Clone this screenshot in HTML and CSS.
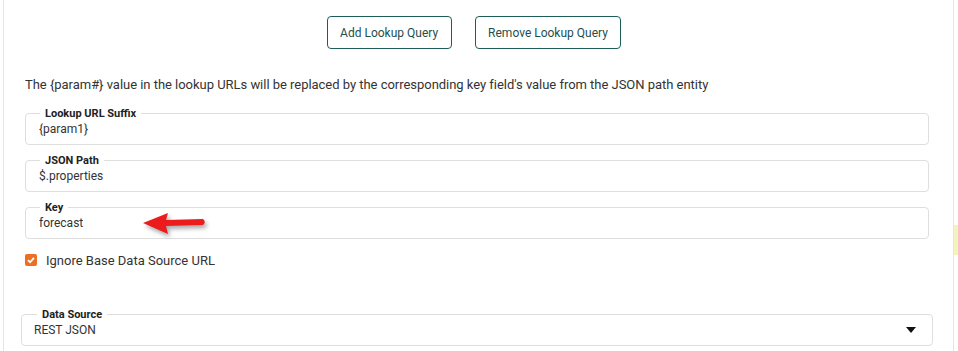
FILE: index.html
```html
<!DOCTYPE html>
<html lang="en">
<head>
    <meta charset="UTF-8">
    <meta name="viewport" content="width=device-width, initial-scale=1.0">
    <title>Lookup Query</title>

    <link rel="stylesheet" href="styles.css">
</head>
<body>

    <div class="page">
        <div class="panel">
            <div class="buttons">
                <button type="button" class="btn">Add Lookup Query</button>
                <button type="button" class="btn">Remove Lookup Query</button>
            </div>

            <p class="hint">The {param#} value in the lookup URLs will be replaced by the corresponding key field's value from the JSON path entity</p>

            <fieldset class="field">
                <legend>Lookup URL Suffix</legend>
                <input type="text" value="{param1}" readonly>
            </fieldset>
            <fieldset class="field">
                <legend>JSON Path</legend>
                <input type="text" value="$.properties" readonly>
            </fieldset>
            <fieldset class="field key_field">
                <legend>Key</legend>
                <input type="text" value="forecast" readonly>
                <svg class="arrow" width="72" height="30" viewBox="0 0 72 30">
                    <path d="M2 14 L27 4 L25 11 L62 10 Q65.5 13 62 16 L25 17 L27 25 Z" fill="#ec1c1c"/>
                </svg>
            </fieldset>

            <label class="check">
                <span class="box">
                    <svg width="12" height="12" viewBox="0 0 12 12">
                        <path d="M3 6.2 L5.1 8.3 L9 3.8" fill="none" stroke="#fff" stroke-width="1.8"/>
                    </svg>
                </span>
                Ignore Base Data Source URL
            </label>

            <fieldset class="field source">
                <legend>Data Source</legend>
                <div class="select">
                    <span>REST JSON</span>
                    <svg width="10" height="6" viewBox="0 0 10 6"><path d="M0 0 H10 L5 6 Z" fill="#111"/></svg>
                </div>
            </fieldset>
        </div>
        <div class="side">
            <div class="side_mark"></div>
        </div>
    </div>

</body>
</html>
```

FILE: styles.css
```css
body {
    margin: 0;
    font-family: Roboto, 'Liberation Sans', sans-serif;
    color: #333;
    background: #fff;
}
.page {
    display: flex;
    height: 351px;
    overflow: hidden;
}
.panel {
    margin-left: 3px;
    width: 951px;
    border-left: 1px solid #e4e4e4;
    border-right: 1px solid #e4e4e4;
    padding: 16px 24px 0 21px;
    box-sizing: border-box;
}
.buttons {
    display: flex;
    justify-content: center;
    gap: 23px;
    padding-right: 6px;
}
.btn {
    height: 33px;
    padding: 0 12.5px;
    font-family: inherit;
    font-size: 12px;
    color: #1f4f4c;
    background: #fff;
    border: 1px solid #1d5e59;
    border-radius: 4px;
}
.hint {
    margin: 27px 0 13px;
    font-size: 13px;
    line-height: 18px;
    letter-spacing: -0.03px;
    color: #333;
}
.field {
    position: relative;
    margin: 0 0 9px;
    padding: 0 11px 6px 13px;
    border: 1px solid #dedede;
    border-radius: 4px;
    min-width: 0;
}
.field legend {
    margin-left: 1px;
    padding: 0 5px;
    font-size: 11px;
    line-height: 13px;
    font-weight: bold;
    color: #222;
}
.field input {
    display: block;
    width: 100%;
    height: 18px;
    padding: 0;
    border: none;
    outline: none;
    background: transparent;
    font-family: inherit;
    font-size: 12px;
    color: #333;
}
.arrow {
    position: absolute;
    left: 115px;
    top: -5px;
    filter: drop-shadow(2px 3px 2px rgba(0, 0, 0, 0.35));
}
.check {
    display: flex;
    align-items: center;
    gap: 9px;
    margin: 12px 0 0;
    height: 18px;
    font-size: 13px;
    color: #333;
}
.box {
    width: 12px;
    height: 12px;
    border-radius: 2px;
    background: #ec6f24;
    display: flex;
}
.source {
    margin: 39px -4px 0;
    padding-left: 12px;
    padding-right: 16px;
}
.source legend {
    margin-left: 3px;
}
.select {
    display: flex;
    justify-content: space-between;
    align-items: center;
    height: 18px;
    font-size: 12px;
    color: #333;
}
.side {
    width: 4px;
    padding-top: 225px;
}
.side_mark {
    height: 30px;
    background: #f3f3bd;
}
```
